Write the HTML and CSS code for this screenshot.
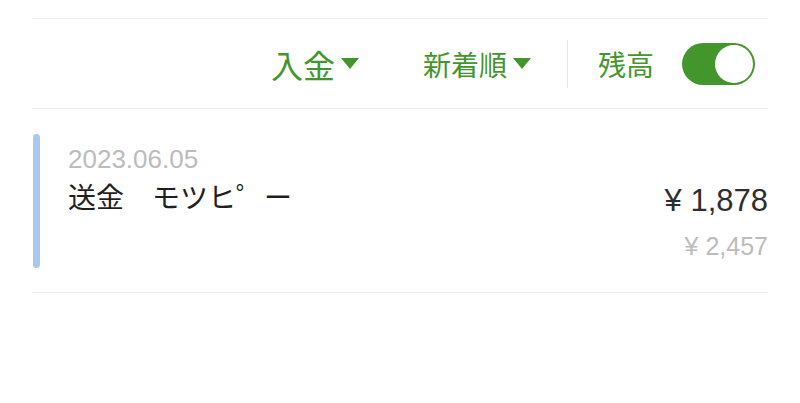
FILE: index.html
```html
<!DOCTYPE html>
<html lang="ja">
<head>
    <meta charset="UTF-8">
    <meta name="viewport" content="width=device-width, initial-scale=1.0">
    <title>入出金明細</title>
    <link rel="stylesheet" href="styles.css">
</head>
<body>

<div class="container">
    <div class="toolbar">
        <div class="filter">入金<span class="caret"></span></div>
        <div class="filter sort">新着順<span class="caret"></span></div>
        <div class="sep"></div>
        <div class="balance-label">残高</div>
        <div class="toggle on"><span class="knob"></span></div>
    </div>

    <div class="entry">
        <div class="bar"></div>
        <div class="info">
            <div class="date">2023.06.05</div>
            <div class="title">送金　モツヒ゜ー</div>
        </div>
        <div class="amounts">
            <div class="amount">¥ 1,878</div>
            <div class="balance">¥ 2,457</div>
        </div>
    </div>
</div>

</body>
</html>
```

FILE: styles.css
```css
body {
    margin: 0;
    background-color: #fff;
    font-family: "Liberation Sans", "Noto Sans CJK JP", sans-serif;
    color: #222;
}
.container {
    padding: 18px 32px 0;
}
.toolbar {
    display: flex;
    justify-content: flex-end;
    align-items: center;
    height: 89px;
    border-top: 1px solid #efefef;
    border-bottom: 1px solid #efefef;
    padding-right: 13px;
    color: #43962c;
}
.filter {
    display: flex;
    align-items: center;
    font-family: "Noto Sans CJK JP", sans-serif;
    font-size: 32px;
}
.sort {
    margin-left: 64px;
    font-size: 28px;
}
.caret {
    width: 0;
    height: 0;
    margin-left: 6px;
    border-left: 9px solid transparent;
    border-right: 9px solid transparent;
    border-top: 11px solid #43962c;
}
.sep {
    width: 1px;
    height: 48px;
    margin: 0 30px 0 36px;
    background-color: #e6e6e6;
}
.balance-label {
    font-family: "Noto Sans CJK JP", sans-serif;
    font-size: 28px;
}
.toggle {
    position: relative;
    width: 73px;
    height: 42px;
    margin-left: 28px;
    border-radius: 21px;
    background-color: #43962c;
}
.knob {
    position: absolute;
    top: 2px;
    right: 2px;
    width: 38px;
    height: 38px;
    border-radius: 50%;
    background-color: #fff;
}
.entry {
    display: flex;
    padding: 25px 0 24px;
    border-bottom: 1px solid #efefef;
}
.bar {
    width: 7px;
    height: 134px;
    margin-left: 1px;
    border-radius: 4px;
    background-color: #a8c9ec;
}
.info {
    flex: 1;
    padding-left: 28px;
}
.date {
    margin-top: 10px;
    font-size: 26px;
    line-height: 30px;
    color: #bcbcbc;
}
.title {
    margin-top: 4px;
    font-family: "Noto Sans CJK JP", sans-serif;
    font-size: 28px;
    line-height: 36px;
    color: #1f1f1f;
}
.amounts {
    text-align: right;
}
.amount {
    margin-top: 47px;
    font-size: 31px;
    line-height: 40px;
    color: #2e2e2e;
}
.balance {
    margin-top: 11px;
    font-size: 25px;
    line-height: 28px;
    color: #bcbcbc;
}
```
